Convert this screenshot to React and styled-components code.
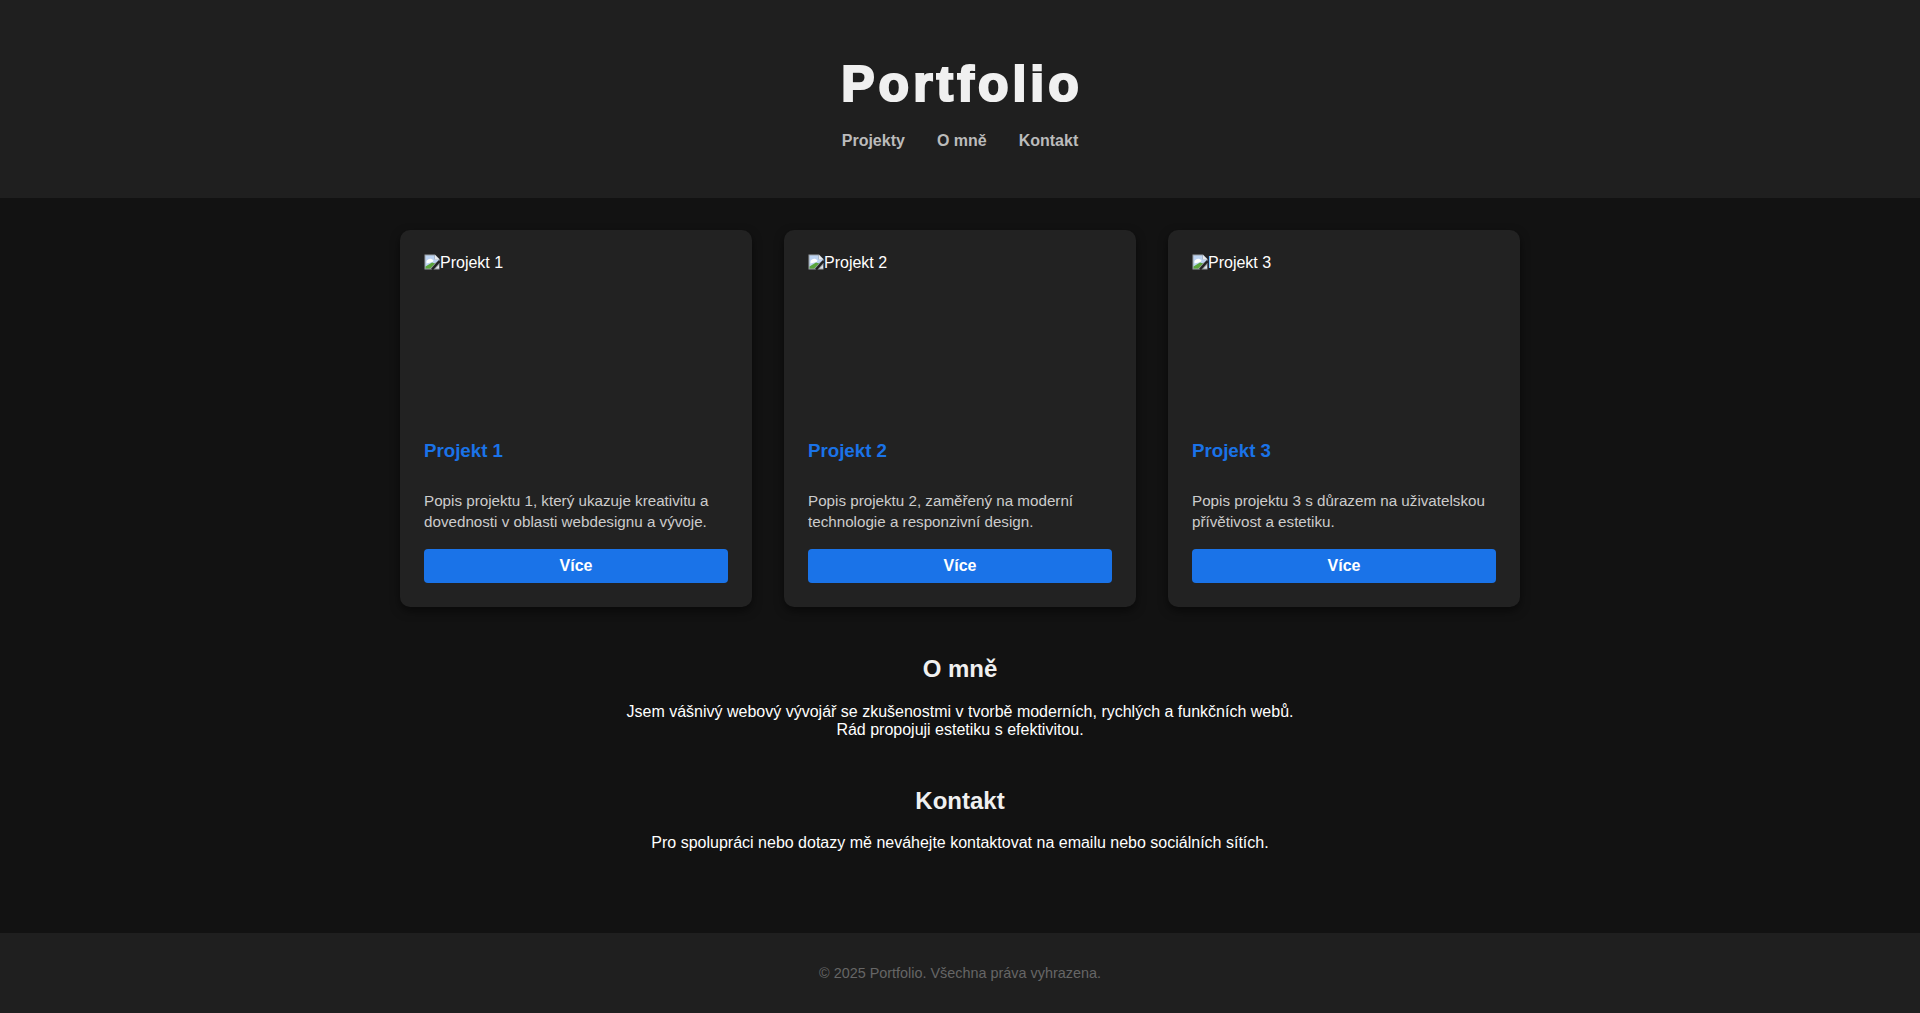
import React from "react";
import styled, { createGlobalStyle } from "styled-components";

const projects = [
  {
    id: 1,
    title: "Projekt 1",
    text: "Popis projektu 1, který ukazuje kreativitu a dovednosti v oblasti webdesignu a vývoje.",
  },
  {
    id: 2,
    title: "Projekt 2",
    text: "Popis projektu 2, zaměřený na moderní technologie a responzivní design.",
  },
  {
    id: 3,
    title: "Projekt 3",
    text: "Popis projektu 3 s důrazem na uživatelskou přívětivost a estetiku.",
  },
];

const BrokenIcon = () => (
  <IconSvg viewBox="0 0 16 16" aria-hidden="true">
    <path d="M0.5 0.5H11L15.5 5V15.5H0.5Z" fill="#9aa0a6" />
    <path d="M1.5 1.5H10.5V5.5H14.5V7L1.5 14Z" fill="#bcd3f2" />
    <path d="M11 1L15.5 5.5H11Z" fill="#e8eaed" />
    <path d="M2.5 7C3.5 4.5 7.5 3.5 9.5 6.5L8.5 8L2.5 9.5Z" fill="#ffffff" />
    <path d="M1.5 14.5V12.5L8 8.5L11 9.5L6 14.5Z" fill="#5aa53c" />
    <path d="M15.5 7L8 15.5" stroke="#222222" strokeWidth="2.4" fill="none" />
    <path d="M11.5 14.5L15 11V14.5Z" fill="#dfe3e8" />
  </IconSvg>
);

const App = () => (
  <>
    <GlobalStyle />
    <Header>
      <Title>Portfolio</Title>
      <Nav>
        <NavLink href="#projekty">Projekty</NavLink>
        <NavLink href="#o-mne">O mně</NavLink>
        <NavLink href="#kontakt">Kontakt</NavLink>
      </Nav>
    </Header>
    <Main>
      <Cards id="projekty">
        {projects.map((project) => (
          <Card key={project.id}>
            <ImageSlot>
              <BrokenIcon />
              {project.title}
            </ImageSlot>
            <CardTitle>{project.title}</CardTitle>
            <CardText>{project.text}</CardText>
            <MoreButton href="#">Více</MoreButton>
          </Card>
        ))}
      </Cards>
      <Section id="o-mne">
        <SectionTitle>O mně</SectionTitle>
        <SectionText>
          Jsem vášnivý webový vývojář se zkušenostmi v tvorbě moderních, rychlých a funkčních webů.
          <br />
          Rád propojuji estetiku s efektivitou.
        </SectionText>
      </Section>
      <Section id="kontakt">
        <SectionTitle>Kontakt</SectionTitle>
        <SectionText>
          Pro spolupráci nebo dotazy mě neváhejte kontaktovat na emailu nebo sociálních sítích.
        </SectionText>
      </Section>
    </Main>
    <Footer>© 2025 Portfolio. Všechna práva vyhrazena.</Footer>
  </>
);

export default App;

const GlobalStyle = createGlobalStyle`
  * {
    box-sizing: border-box;
  }

  body {
    margin: 0;
    background-color: #121212;
    color: #ffffff;
    font-family: "Liberation Sans", Arial, sans-serif;
  }
`;

const Header = styled.header`
  display: flex;
  flex-direction: column;
  align-items: center;
  height: 198px;
  padding-top: 48px;
  background-color: #1f1f1f;
`;

/* no Arial Black here, so a stroke thickens the bold */
const Title = styled.h1`
  margin: 0;
  padding-left: 4px;
  font-size: 50px;
  line-height: 72px;
  font-weight: 900;
  letter-spacing: 4px;
  color: #f0f0f0;
  -webkit-text-stroke: 2.2px #f0f0f0;
`;

const Nav = styled.nav`
  display: flex;
  gap: 32px;
  margin-top: 12px;
`;

const NavLink = styled.a`
  font-size: 16px;
  font-weight: 700;
  color: #bbbbbb;
  text-decoration: none;
`;

const Main = styled.main`
  width: 1120px;
  height: 735px;
  margin: 0 auto;
  padding-top: 32px;
`;

const Cards = styled.div`
  display: grid;
  grid-template-columns: repeat(3, 1fr);
  gap: 32px;
`;

const Card = styled.article`
  display: flex;
  flex-direction: column;
  padding: 24px;
  border-radius: 10px;
  background-color: #222222;
  box-shadow: 0 4px 10px rgba(0, 0, 0, 0.5);
`;

const ImageSlot = styled.div`
  height: 160px;
  font-size: 16px;
  line-height: 18px;
  color: #ffffff;
`;

const IconSvg = styled.svg`
  width: 16px;
  height: 16px;
  vertical-align: -2px;
`;

const CardTitle = styled.h3`
  margin: 26px 0 0;
  font-size: 18.72px;
  line-height: 22px;
  font-weight: 700;
  color: #1a73e8;
`;

const CardText = styled.p`
  margin: 28px 0 0;
  font-size: 15.2px;
  line-height: 21px;
  color: #cccccc;
`;

const MoreButton = styled.a`
  margin-top: 17px;
  height: 34px;
  border-radius: 4px;
  background-color: #1a73e8;
  color: #ffffff;
  font-size: 16px;
  font-weight: 700;
  line-height: 34px;
  text-align: center;
  text-decoration: none;
`;

const Section = styled.section`
  margin-top: 48px;
  text-align: center;
`;

const SectionTitle = styled.h2`
  margin: 0;
  font-size: 24px;
  line-height: 27px;
  font-weight: 700;
  color: #f0f0f0;
`;

const SectionText = styled.p`
  margin: 20.6px 0 0;
  font-size: 16px;
  line-height: 18px;
  color: #ffffff;
`;

const Footer = styled.footer`
  height: 80px;
  padding-top: 32px;
  background-color: #1f1f1f;
  color: #666666;
  font-size: 14.4px;
  line-height: 16px;
  text-align: center;
`;
